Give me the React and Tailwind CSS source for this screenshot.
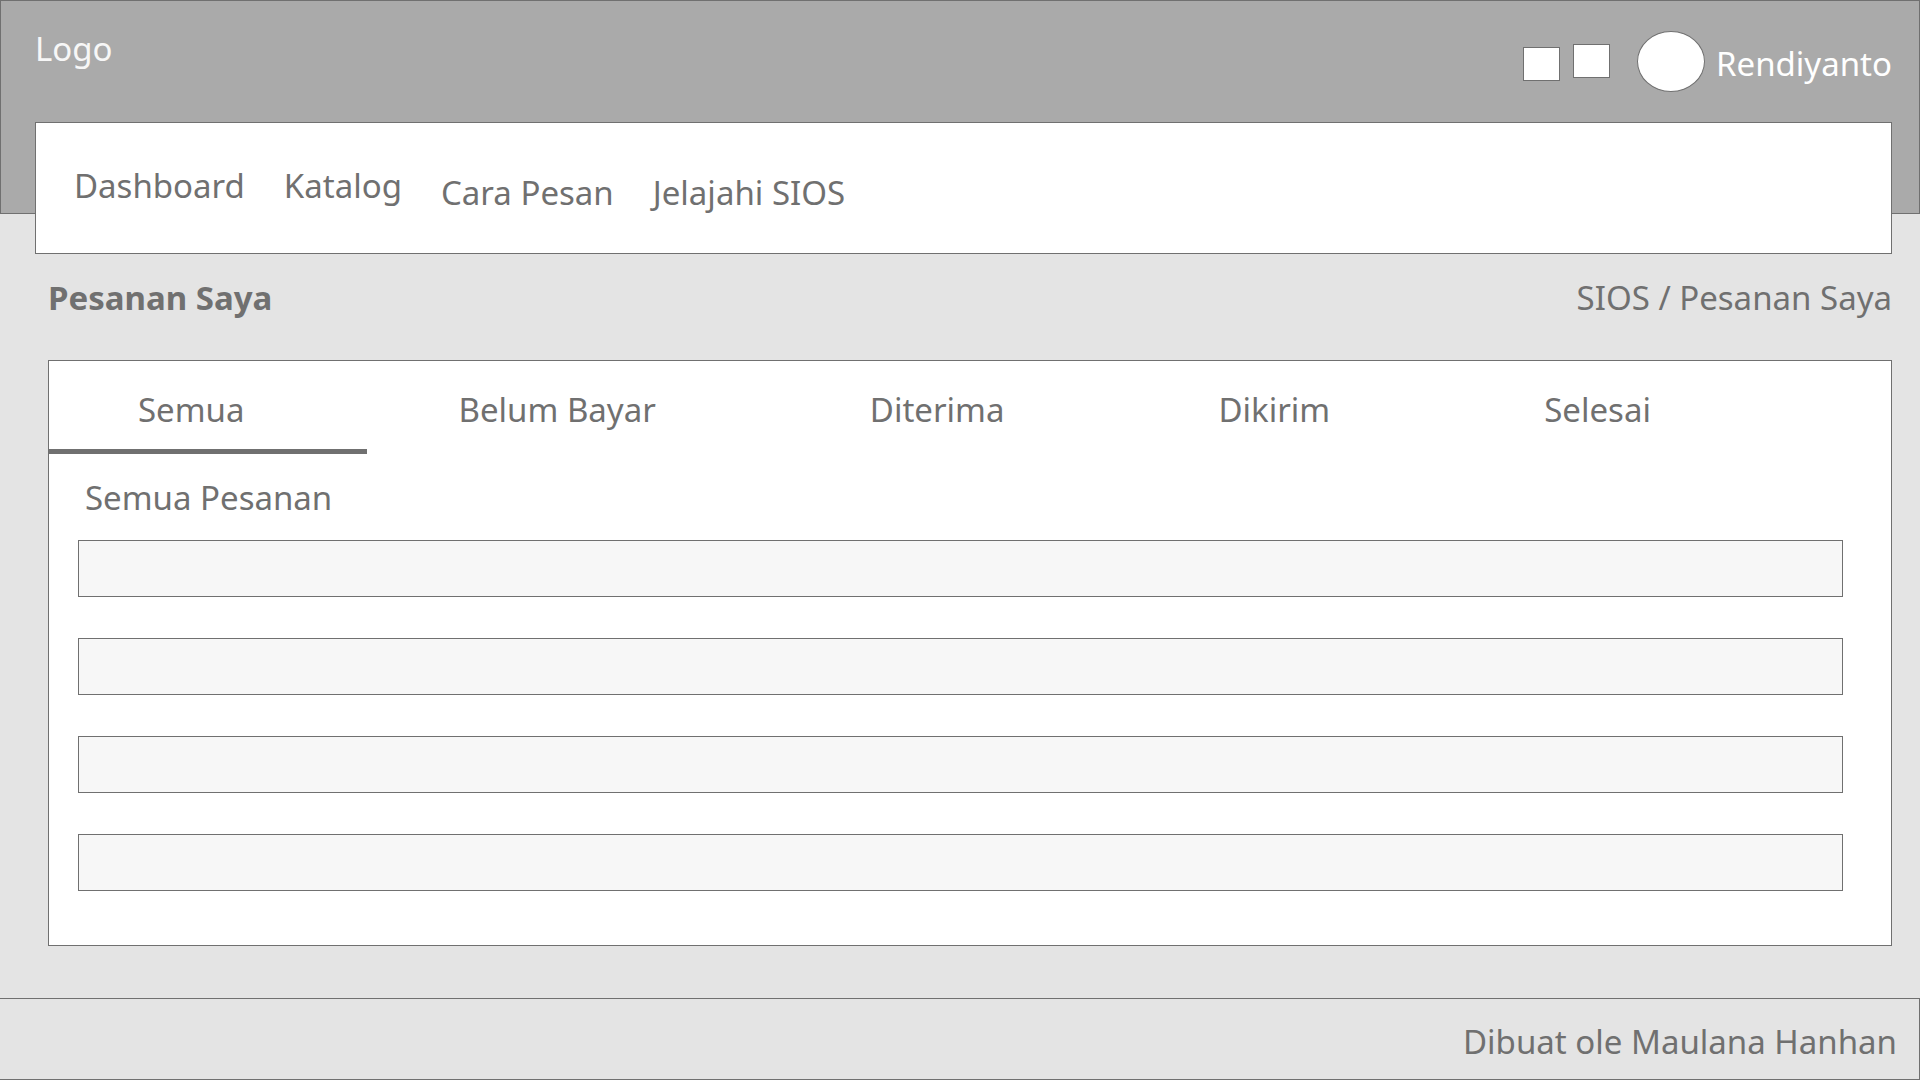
import { useState } from "react";

const tabs = ["Semua", "Belum Bayar", "Diterima", "Dikirim", "Selesai"];
const orders = [1, 2, 3, 4];

function Header() {
  return (
    <header className="border border-[#707070] bg-[#aaaaaa] pb-[91px] pl-[34px] pr-[27px] pt-[26px]">
      <div className="flex h-[95px] items-start justify-between">
        <a href="#" className="text-[#f7f7f7]">Logo</a>
        <div className="flex items-start pt-1">
          <div className="flex gap-[13px] pt-[13px]">
            <button aria-label="Notifikasi" className="mt-[3px] h-[34px] w-[37px] border border-[#707070] bg-white" />
            <button aria-label="Keranjang" className="h-[34px] w-[37px] border border-[#707070] bg-white" />
          </div>
          <button aria-label="Profil" className="ml-[27px] h-[61px] w-[68px] rounded-[50%] border border-[#707070] bg-white" />
          <span className="ml-[11px] pt-[11px] text-white">Rendiyanto</span>
        </div>
      </div>
    </header>
  );
}

function MainNav() {
  return (
    <nav className="relative ml-[35px] mr-7 -mt-[92px] flex min-h-[132px] flex-wrap gap-x-[39px] border border-[#707070] bg-white px-[38px] pt-[41px]">
      <div className="flex gap-[39px]">
        <a href="#">Dashboard</a>
        <a href="#">Katalog</a>
      </div>
      <div className="flex gap-[39px] pt-[7px]">
        <a href="#">Cara Pesan</a>
        <a href="#">Jelajahi SIOS</a>
      </div>
    </nav>
  );
}

export default function App() {
  const [active, setActive] = useState("Semua");
  return (
    <div className="flex min-h-screen flex-col bg-[#e4e4e4] font-['Noto_Sans',sans-serif] text-[33px] leading-[44px] text-[#707070]">
      <Header />
      <MainNav />
      <main className="ml-12 mr-7 grow pb-[52px] pt-[22px]">
        <div className="flex justify-between pb-10">
          <h1 className="font-bold">Pesanan Saya</h1>
          <a href="#">SIOS / Pesanan Saya</a>
        </div>
        <section className="border border-[#707070] bg-white pb-[54px]">
          <div role="tablist" className="flex gap-[3px]">
            {tabs.map((tab) => (
              <button
                key={tab}
                role="tab"
                aria-selected={tab === active}
                onClick={() => setActive(tab)}
                className={
                  "whitespace-nowrap border-b-[5px] pb-[17px] pl-[89px] pr-[122px] pt-[27px] " +
                  (tab === active ? "border-[#707070]" : "border-transparent")
                }
              >
                {tab}
              </button>
            ))}
          </div>
          <h2 className="pb-5 pl-9 pt-[22px]">Semua Pesanan</h2>
          <ul className="ml-[29px] mr-12 flex flex-col gap-[41px]">
            {orders.map((id) => (
              <li key={id} className="h-[57px] border border-[#707070] bg-[#f7f7f7]" />
            ))}
          </ul>
        </section>
      </main>
      <footer className="border-y border-r border-[#707070] pb-[15px] pr-[22px] pt-[21px] text-right">
        Dibuat ole Maulana Hanhan
      </footer>
    </div>
  );
}
